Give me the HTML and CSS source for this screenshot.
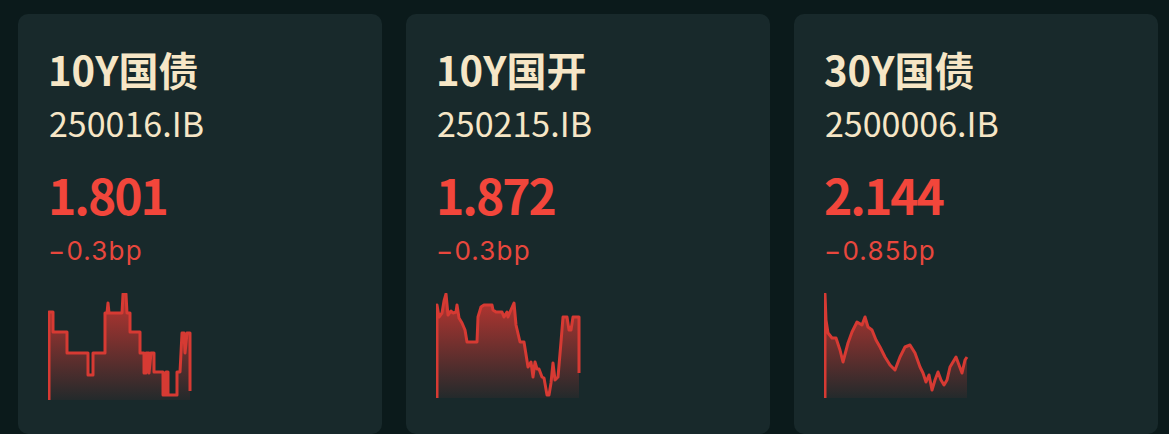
FILE: index.html
```html
<!DOCTYPE html>
<html lang="zh-CN">
<head>
  <meta charset="UTF-8" />
  <meta name="viewport" content="width=device-width, initial-scale=1.0"/>
  <title>债券行情</title>
  <link rel="stylesheet" href="styles.css">
</head>
<body>

  <main class="quotes">

    <section class="quote-card">
      <h2 class="bond-name">10Y国债</h2>
      <p class="bond-code">250016.IB</p>
      <p class="bond-yield">1.801</p>
      <p class="bond-change">−0.3bp</p>
      <svg class="spark" width="145" height="107" viewBox="0 0 145 107">
        <defs>
          <linearGradient id="fade1" x1="0" y1="0" x2="0" y2="1">
            <stop offset="0" stop-color="#cf3731" stop-opacity="0.9"/>
            <stop offset="1" stop-color="#cf3731" stop-opacity="0.06"/>
          </linearGradient>
        </defs>
        <path fill="url(#fade1)" d="M1,19 L5,19 L5,39 L19,39 L19,60 L40,60 L40,82 L45,82 L45,60 L57,60 L57,20 L59,20 L60,10 L61,20 L74,20 L75,1 L78,1 L79,20 L82,20 L82,39 L92,39 L92,60 L96,60 L96,80 L98,80 L98,60 L101,60 L101,80 L103,60 L106,60 L106,79 L115,79 L115,102 L118,102 L118,79 L120,79 L120,102 L129,102 L129,79 L132,79 L134,40 L136,40 L137,60 L139,40 L142,40 L142,107 L1,107 Z"/>
        <path fill="none" stroke="#d63a33" stroke-width="3" stroke-linejoin="round" d="M1,107 L1,19 L5,19 L5,39 L19,39 L19,60 L40,60 L40,82 L45,82 L45,60 L57,60 L57,20 L59,20 L60,10 L61,20 L74,20 L75,1 L78,1 L79,20 L82,20 L82,39 L92,39 L92,60 L96,60 L96,80 L98,80 L98,60 L101,60 L101,80 L103,60 L106,60 L106,79 L115,79 L115,102 L118,102 L118,79 L120,79 L120,102 L129,102 L129,79 L132,79 L134,40 L136,40 L137,60 L139,40 L142,40 L142,98"/>
      </svg>
    </section>

    <section class="quote-card">
      <h2 class="bond-name">10Y国开</h2>
      <p class="bond-code">250215.IB</p>
      <p class="bond-yield">1.872</p>
      <p class="bond-change">−0.3bp</p>
      <svg class="spark" width="145" height="107" viewBox="0 0 145 107">
        <defs>
          <linearGradient id="fade2" x1="0" y1="0" x2="0" y2="1">
            <stop offset="0" stop-color="#cf3731" stop-opacity="0.9"/>
            <stop offset="1" stop-color="#cf3731" stop-opacity="0.06"/>
          </linearGradient>
        </defs>
        <path fill="url(#fade2)" d="M1,12 L3,24 L6,20 L8,8 L10,1 L12,22 L15,18 L17,20 L20,19 L21,12 L23,25 L26,30 L29,37 L31,49 L41,49 L42,24 L45,14 L48,12 L56,12 L57,17 L60,19 L66,19 L68,24 L71,19 L72,24 L74,19 L78,10 L80,32 L84,49 L88,49 L92,74 L95,69 L97,84 L99,69 L101,76 L103,76 L106,84 L108,85 L111,102 L113,102 L115,90 L117,70 L119,87 L122,84 L125,49 L127,24 L131,24 L133,37 L135,37 L137,24 L143,24 L143,105 L1,105 Z"/>
        <path fill="none" stroke="#d63a33" stroke-width="3" stroke-linejoin="round" d="M1,105 L1,12 L3,24 L6,20 L8,8 L10,1 L12,22 L15,18 L17,20 L20,19 L21,12 L23,25 L26,30 L29,37 L31,49 L41,49 L42,24 L45,14 L48,12 L56,12 L57,17 L60,19 L66,19 L68,24 L71,19 L72,24 L74,19 L78,10 L80,32 L84,49 L88,49 L92,74 L95,69 L97,84 L99,69 L101,76 L103,76 L106,84 L108,85 L111,102 L113,102 L115,90 L117,70 L119,87 L122,84 L125,49 L127,24 L131,24 L133,37 L135,37 L137,24 L143,24 L143,80"/>
      </svg>
    </section>

    <section class="quote-card">
      <h2 class="bond-name">30Y国债</h2>
      <p class="bond-code">2500006.IB</p>
      <p class="bond-yield">2.144</p>
      <p class="bond-change">−0.85bp</p>
      <svg class="spark" width="145" height="107" viewBox="0 0 145 107">
        <defs>
          <linearGradient id="fade3" x1="0" y1="0" x2="0" y2="1">
            <stop offset="0" stop-color="#cf3731" stop-opacity="0.9"/>
            <stop offset="1" stop-color="#cf3731" stop-opacity="0.06"/>
          </linearGradient>
        </defs>
        <path fill="url(#fade3)" d="M1,1 L2,27 L4,40 L8,45 L12,45 L16,57 L19,69 L24,50 L28,39 L33,29 L38,32 L41,24 L44,34 L48,37 L52,47 L56,54 L61,64 L66,72 L71,77 L76,64 L81,54 L86,52 L91,60 L96,74 L99,80 L102,89 L105,82 L108,97 L111,87 L114,79 L117,87 L120,92 L123,87 L126,74 L129,69 L132,64 L135,72 L138,80 L141,67 L143,64 L143,105 L1,105 Z"/>
        <path fill="none" stroke="#d63a33" stroke-width="3" stroke-linejoin="round" d="M1,105 L1,1 L2,27 L4,40 L8,45 L12,45 L16,57 L19,69 L24,50 L28,39 L33,29 L38,32 L41,24 L44,34 L48,37 L52,47 L56,54 L61,64 L66,72 L71,77 L76,64 L81,54 L86,52 L91,60 L96,74 L99,80 L102,89 L105,82 L108,97 L111,87 L114,79 L117,87 L120,92 L123,87 L126,74 L129,69 L132,64 L135,72 L138,80 L141,67 L143,64"/>
      </svg>
    </section>

  </main>

</body>
</html>
```

FILE: styles.css
```css
body {
  font-family: "Noto Sans CJK SC", "Noto Sans", sans-serif;
  margin: 0;
  background-color: #0b1a1b;
  color: #f6e6c6;
  overflow: hidden;
}

.quotes {
  display: flex;
  gap: 24px;
  padding: 14px 18px 0;
}

.quote-card {
  flex: 0 0 364px;
  height: 420px;
  box-sizing: border-box;
  padding: 31px 30px 0;
  background-color: #18292b;
  border-radius: 10px;
  display: flex;
  flex-direction: column;
  align-items: flex-start;
}

.bond-name {
  margin: 0;
  font-size: 40px;
  line-height: 48px;
  font-weight: 700;
}

.bond-code {
  margin: 10px 0 0;
  font-size: 34px;
  line-height: 40px;
  padding-left: 1px;
}

.bond-yield {
  margin: 22px 0 0;
  font-size: 48px;
  line-height: 58px;
  font-weight: 700;
  letter-spacing: -2px;
  color: #f2463b;
}

.bond-change {
  margin: 13px 0 0;
  font-family: Inter, "Noto Sans CJK SC", sans-serif;
  font-size: 26px;
  line-height: 30px;
  letter-spacing: 1.2px;
  color: #e8473d;
}

.spark {
  display: block;
  margin-top: 27px;
}
```
